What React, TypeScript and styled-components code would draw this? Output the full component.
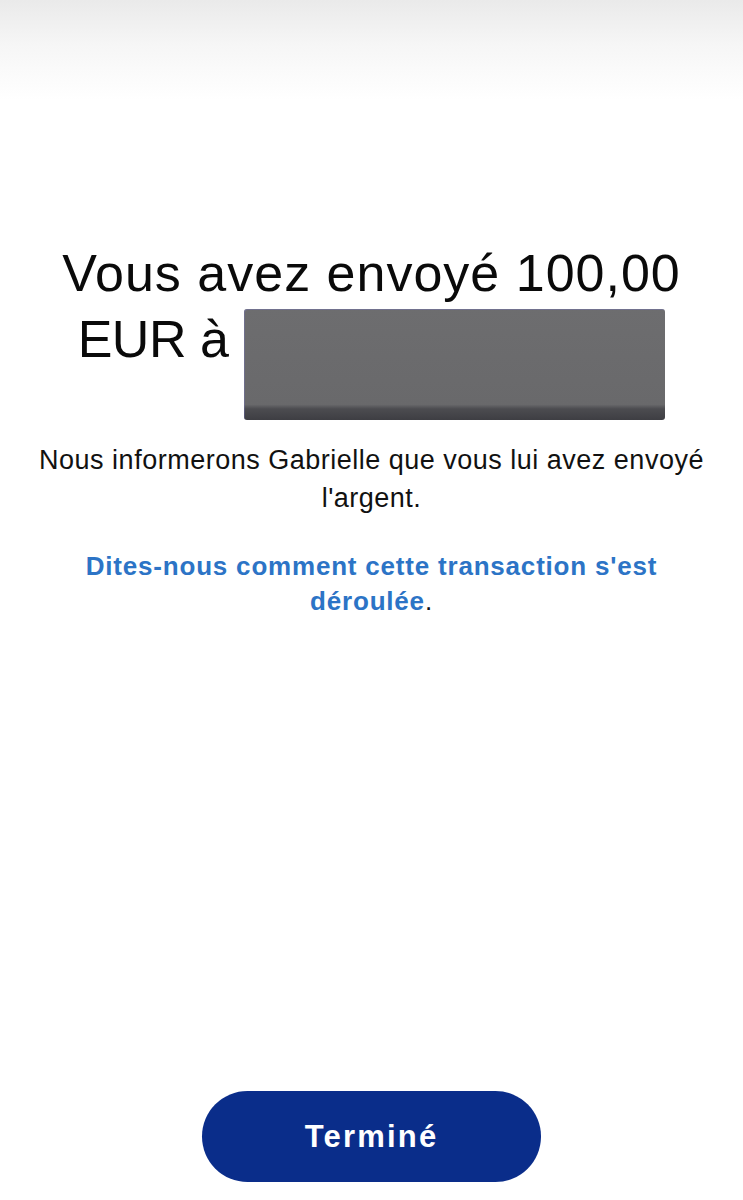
import React from 'react';
import styled, { createGlobalStyle } from 'styled-components';

const GlobalStyle = createGlobalStyle`
    html, body {
        margin: 0;
        padding: 0;
        background: #ffffff;
    }
    body {
        font-family: "Liberation Sans", Arial, sans-serif;
        color: #111111;
    }
`;

const Screen = styled.div`
    width: 743px;
    height: 1200px;
    display: flex;
    flex-direction: column;
    align-items: center;
    background: linear-gradient(to bottom, #eaeaea 0px, #f6f6f6 45px, #ffffff 100px);
`;

const Content = styled.div`
    display: flex;
    flex-direction: column;
    align-items: center;
    padding-top: 240px;
    flex: 1;
`;

const Heading = styled.h1`
    margin: 0;
    width: 680px;
    text-align: center;
    font-size: 52px;
    font-weight: 400;
    line-height: 66px;
    letter-spacing: 1px;
    color: #0a0a0a;
`;

const Recipient = styled.span`
    letter-spacing: -0.5px;
`;

const Redacted = styled.span`
    display: inline-block;
    width: 421px;
    height: 111px;
    margin: 3px 0 0 16px;
    vertical-align: top;
    border-radius: 3px;
    background: linear-gradient(to bottom, #6d6d6f 0%, #69696b 86%, #4c4c50 90%, #3e3e43 100%);
    box-shadow: inset 1px 1px 0 rgba(120, 120, 200, 0.35);
`;

const Message = styled.p`
    margin: 21px 0 0;
    width: 690px;
    text-align: center;
    font-size: 27px;
    line-height: 38px;
    letter-spacing: 0.5px;
    color: #111111;
`;

const Feedback = styled.p`
    margin: 32px 0 0;
    width: 610px;
    text-align: center;
    font-size: 26px;
    line-height: 35px;
    letter-spacing: 0.8px;
    font-weight: 700;
    color: #111111;
`;

const FeedbackLink = styled.a`
    color: #2c74c6;
    text-decoration: none;
`;

const Period = styled.span`
    font-weight: 400;
`;

const Footer = styled.div`
    display: flex;
    justify-content: center;
    padding-bottom: 18px;
`;

const DoneButton = styled.button`
    width: 339px;
    height: 91px;
    border: none;
    border-radius: 46px;
    background: #0a2d8a;
    color: #ffffff;
    font-family: "Liberation Sans", Arial, sans-serif;
    font-size: 31px;
    font-weight: 700;
    letter-spacing: 2.2px;
    cursor: pointer;
`;

const App: React.FunctionComponent<{}> = () => {
    return (
        <>
            <GlobalStyle />
            <Screen>
                <Content>
                    <Heading>
                        Vous avez envoyé 100,00 <Recipient>EUR à</Recipient>
                        <Redacted />
                    </Heading>
                    <Message>Nous informerons Gabrielle que vous lui avez envoyé l'argent.</Message>
                    <Feedback>
                        <FeedbackLink href="#">Dites-nous comment cette transaction s'est déroulée</FeedbackLink>
                        <Period>.</Period>
                    </Feedback>
                </Content>
                <Footer>
                    <DoneButton>Terminé</DoneButton>
                </Footer>
            </Screen>
        </>
    );
};

export default App;
